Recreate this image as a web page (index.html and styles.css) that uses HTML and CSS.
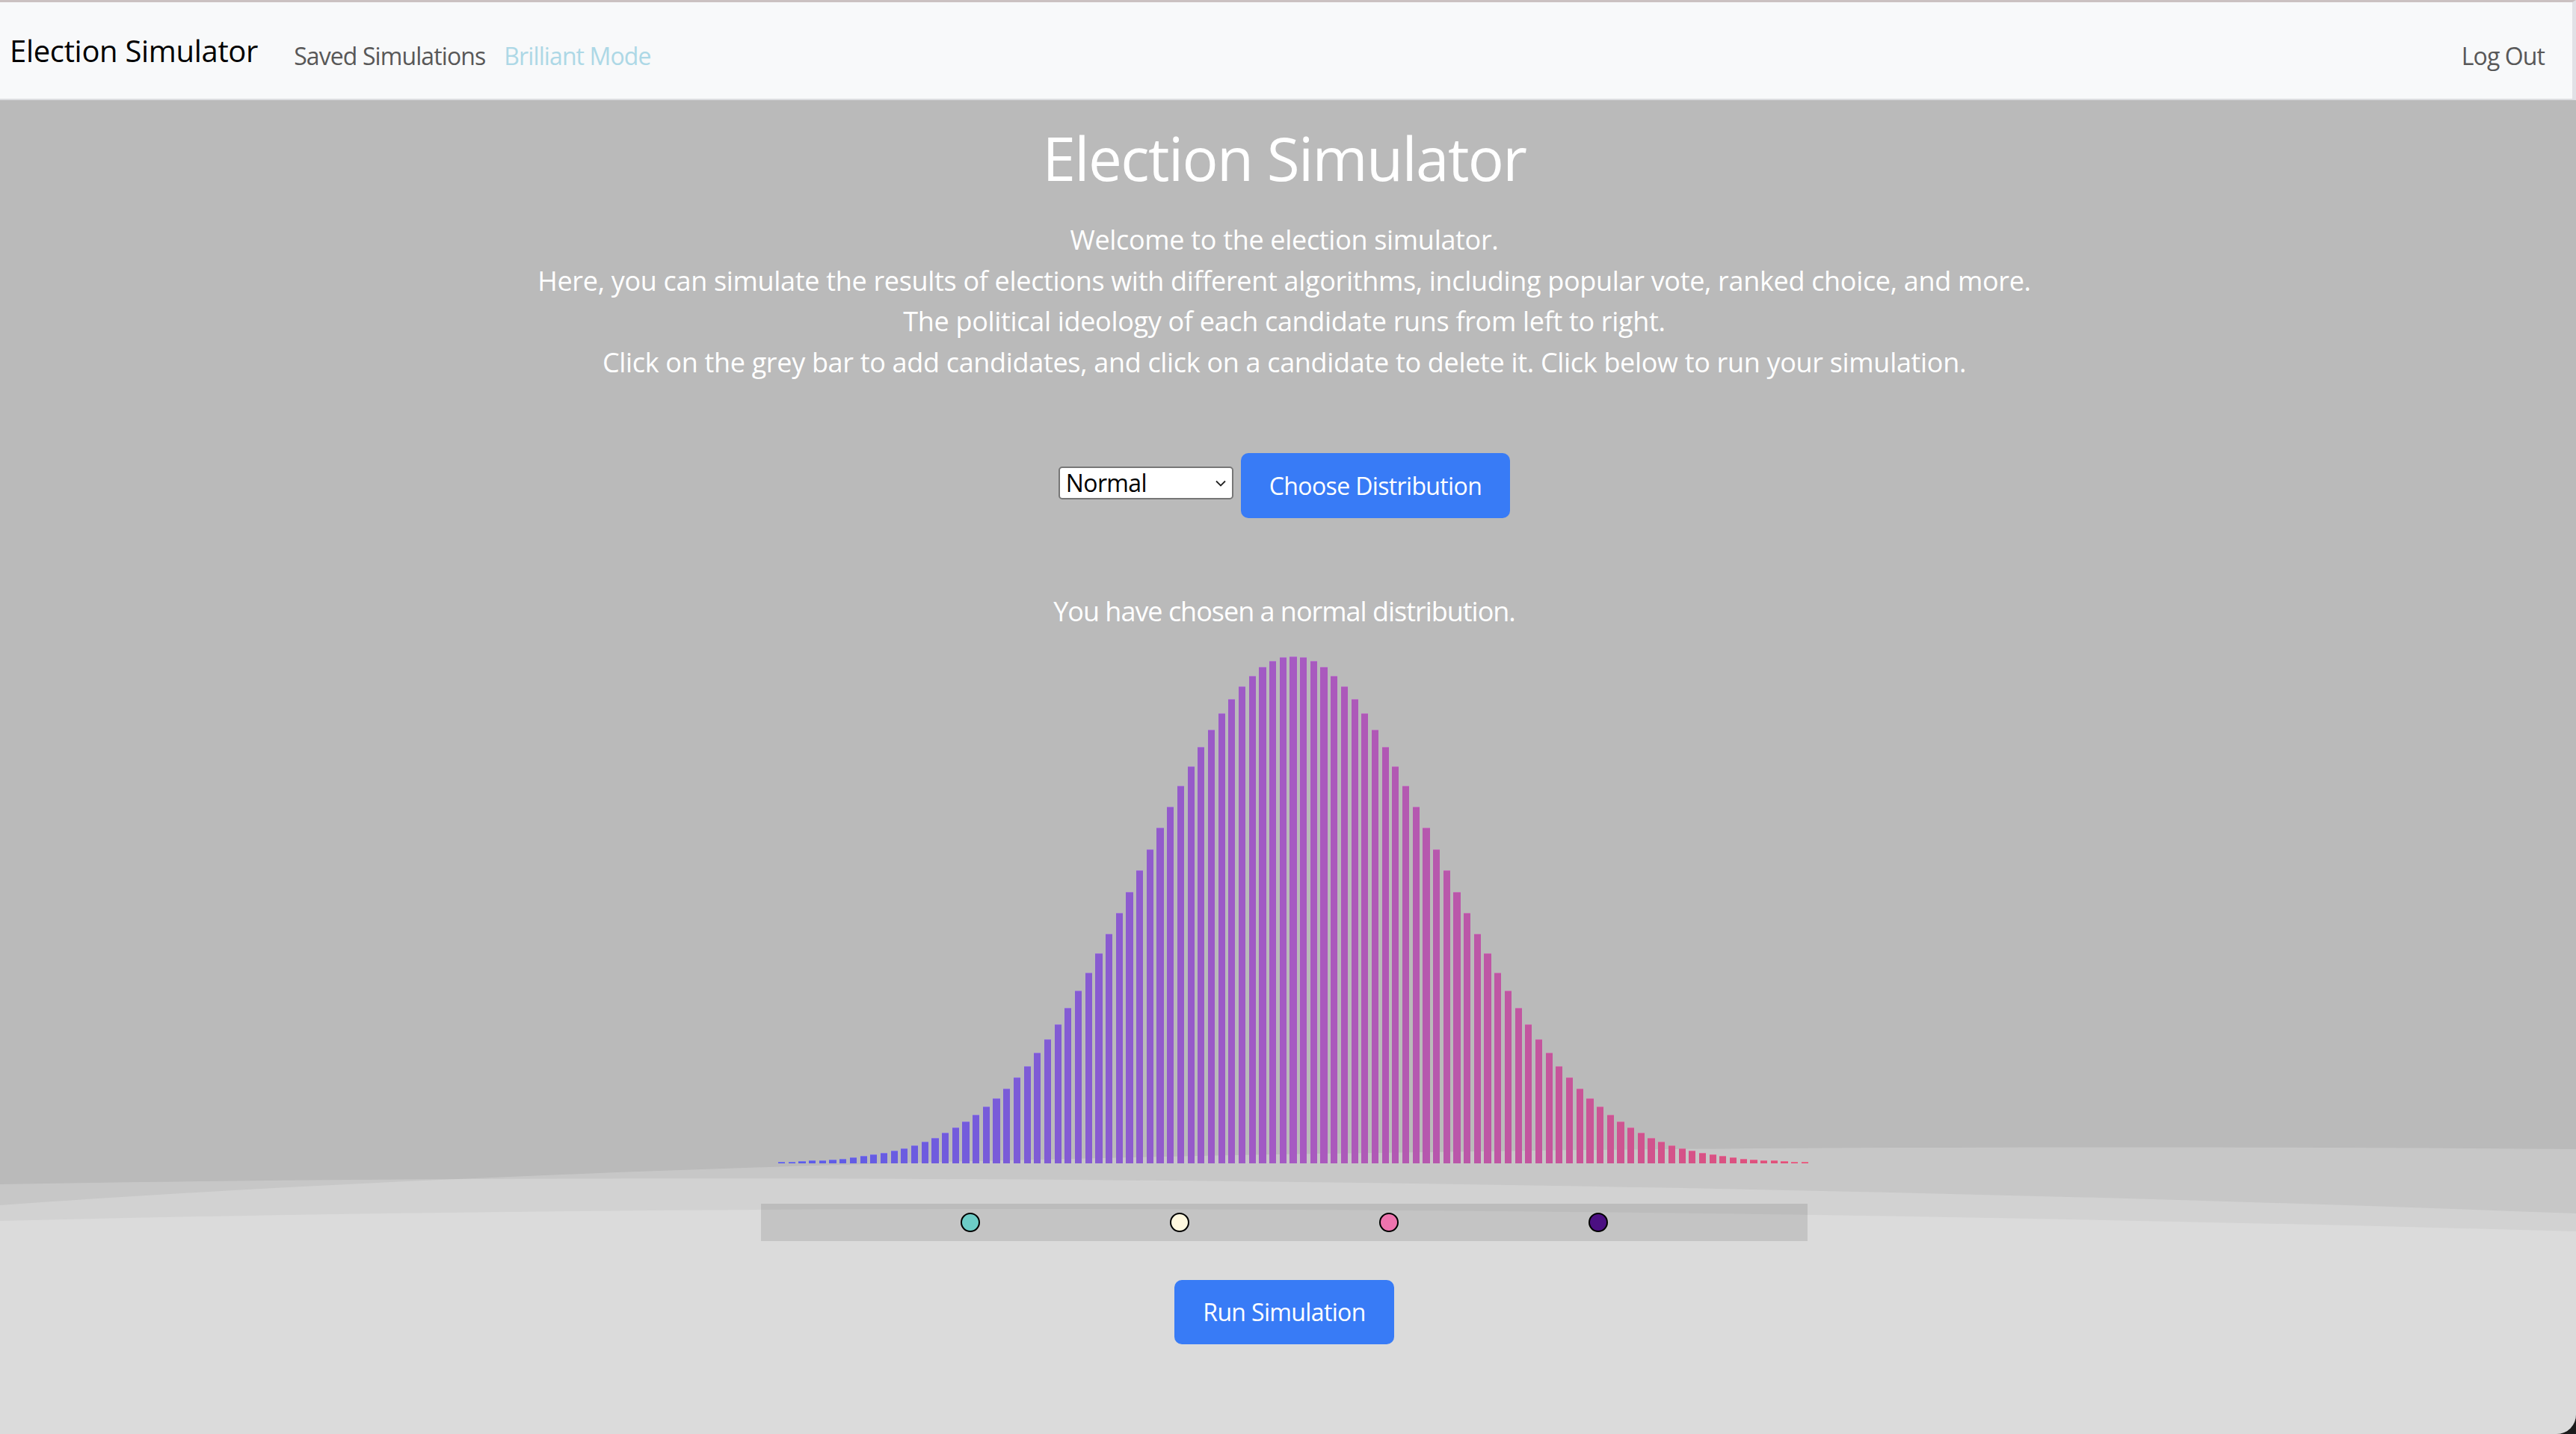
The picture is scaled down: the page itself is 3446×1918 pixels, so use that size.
FILE: index.html
```html
<!DOCTYPE html>
<html lang="en">
<head>
<meta charset="utf-8">
<title>Election Simulator</title>
<link rel="stylesheet" href="styles.css">
</head>
<body>
<div class="frame">
  <nav class="navbar">
    <a class="brand">Election Simulator</a>
    <ul class="nav-links">
      <li><a class="nav-link">Saved Simulations</a></li>
      <li><a class="nav-link brilliant">Brilliant Mode</a></li>
    </ul>
    <a class="nav-link logout">Log Out</a>
  </nav>
  <main class="page">
    <svg class="waves" viewBox="0 1518 3446 400" preserveAspectRatio="none" aria-hidden="true">
      <path d="M0 1584 C900 1568 2200 1575 3446 1623 L3446 1918 L0 1918 Z"/>
      <path d="M0 1612 C1000 1540 2400 1528 3446 1537 L3446 1918 L0 1918 Z"/>
      <path d="M0 1633 C1000 1608 2200 1612 3446 1647 L3446 1918 L0 1918 Z"/>
    </svg>
    <h1 class="title">Election Simulator</h1>
    <p class="intro">Welcome to the election simulator.<br>Here, you can simulate the results of elections with different algorithms, including popular vote, ranked choice, and more.<br>The political ideology of each candidate runs from left to right.<br>Click on the grey bar to add candidates, and click on a candidate to delete it. Click below to run your simulation.</p>
    <div class="controls">
      <div class="select-wrap">
        <select class="dist-select">
          <option>Normal</option>
          <option>Uniform</option>
          <option>Bimodal</option>
        </select>
        <svg class="chevron" viewBox="0 0 14 9" aria-hidden="true"><path d="M1 1.5 L7 7.5 L13 1.5"/></svg>
      </div>
      <button class="btn">Choose Distribution</button>
    </div>
    <p class="chosen">You have chosen a normal distribution.</p>
    <div class="chart" id="chart"></div>
    <div class="candidate-bar">
      <span class="candidate teal" style="left:20%"></span>
      <span class="candidate cream" style="left:40%"></span>
      <span class="candidate pink" style="left:60%"></span>
      <span class="candidate indigo" style="left:80%"></span>
    </div>
    <button class="btn run">Run Simulation</button>
  </main>
</div>
<script src="script.js"></script>
</body>
</html>
```
FILE: styles.css
```css
* { box-sizing: border-box; }

html { background: #1c1c1c; }

body {
  margin: 0;
  font-family: "Open Sans", "Noto Sans", sans-serif;
  letter-spacing: -0.02em;
}

.frame {
  min-height: 100vh;
  background: #bababa;
  border-bottom-right-radius: 26px;
  overflow: hidden;
  position: relative;
  isolation: isolate;
  display: flex;
  flex-direction: column;
}

.navbar {
  display: flex;
  align-items: center;
  height: 134px;
  background: #f8f9fa;
  border-top: 3px solid #cbc1c1;
  border-bottom: 2px solid #dcdde0;
  border-right: 5px solid #e1e1e6;
  padding: 0 37px 0 13px;
}

.brand {
  font-size: 40px;
  line-height: 60px;
  color: #000;
  margin-right: 48px;
}

.nav-links {
  display: flex;
  list-style: none;
  margin: 0;
  padding: 0;
  gap: 25px;
  flex: 1;
}

.nav-link {
  display: block;
  font-size: 32px;
  line-height: 48px;
  letter-spacing: -0.9px;
  color: #585858;
  padding-top: 14px;
}

.brilliant { color: #add8e6; }

.page {
  flex: 1;
  position: relative;
  display: flex;
  flex-direction: column;
  align-items: center;
  color: #fff;
  text-align: center;
  padding-right: 10px;
}

.waves {
  position: absolute;
  left: 0;
  bottom: 0;
  width: 100%;
  height: 400px;
  z-index: -1;
}

.waves path { fill: rgba(255, 255, 255, 0.2); }

.title {
  font-size: 80px;
  font-weight: 400;
  line-height: 96px;
  letter-spacing: -1.6px;
  margin: 29px 0 0;
}

.intro {
  font-size: 36px;
  line-height: 54.5px;
  margin: 35px 0 0;
}

.controls {
  display: flex;
  align-items: flex-start;
  gap: 10px;
  margin-top: 94px;
}

.select-wrap {
  position: relative;
  margin-top: 18px;
}

.dist-select {
  appearance: none;
  -webkit-appearance: none;
  width: 234px;
  height: 44px;
  border: 2px solid #767676;
  border-radius: 5px;
  background: #fff;
  color: #000;
  font-family: "Open Sans", "Noto Sans", sans-serif;
  letter-spacing: -0.02em;
  font-size: 32px;
  line-height: 40px;
  padding: 0 0 0 8px;
}

.chevron {
  position: absolute;
  right: 10px;
  top: 18px;
  width: 14px;
  height: 9px;
  pointer-events: none;
}

.chevron path {
  fill: none;
  stroke: #222;
  stroke-width: 1.8;
}

.btn {
  height: 87px;
  padding: 0 38px;
  border: 0;
  border-radius: 10px;
  background: #387bf6;
  color: #fff;
  font-family: "Open Sans", "Noto Sans", sans-serif;
  letter-spacing: -0.02em;
  font-size: 32px;
}

.chosen {
  font-size: 36px;
  line-height: 54.5px;
  letter-spacing: -1.02px;
  margin: 98px 0 0;
}

.chart {
  display: flex;
  align-items: flex-end;
  gap: 4.5px;
  height: 710px;
  margin-left: 24px;
}

.bar {
  width: 9.2px;
  flex: none;
  border-top: 1px solid rgba(255, 255, 255, 0.18);
}

.candidate-bar {
  position: relative;
  width: 1400px;
  height: 50px;
  margin-top: 54px;
  background: rgba(0, 0, 0, 0.1);
}

.candidate {
  position: absolute;
  top: 50%;
  width: 26px;
  height: 26px;
  border: 2px solid #000;
  border-radius: 50%;
  transform: translate(-50%, -50%);
}

.teal { background: #6dccc6; }
.cream { background: #fff8df; }
.pink { background: #ee74ae; }
.indigo { background: #4b0f82; }

.run {
  height: 86px;
  padding: 0 38px;
  margin-top: 52px;
}
```
FILE: script.js
```js
(function () {
  var chart = document.getElementById('chart');
  var N = 101, mid = 50, sigma = 14.3, maxH = 678;
  var stops = [[88, 92, 234], [166, 90, 194], [228, 80, 118]];
  for (var i = 0; i < N; i++) {
    var d = i - mid;
    var h = maxH * Math.exp(-d * d / (2 * sigma * sigma));
    var t = i / (N - 1);
    var a, b, u;
    if (t < 0.5) { a = stops[0]; b = stops[1]; u = t / 0.5; }
    else { a = stops[1]; b = stops[2]; u = (t - 0.5) / 0.5; }
    var col = [0, 1, 2].map(function (k) { return Math.round(a[k] + (b[k] - a[k]) * u); });
    var bar = document.createElement('div');
    bar.className = 'bar';
    bar.style.height = Math.max(h, 2).toFixed(1) + 'px';
    bar.style.backgroundColor = 'rgb(' + col.join(',') + ')';
    chart.appendChild(bar);
  }
})();
```
